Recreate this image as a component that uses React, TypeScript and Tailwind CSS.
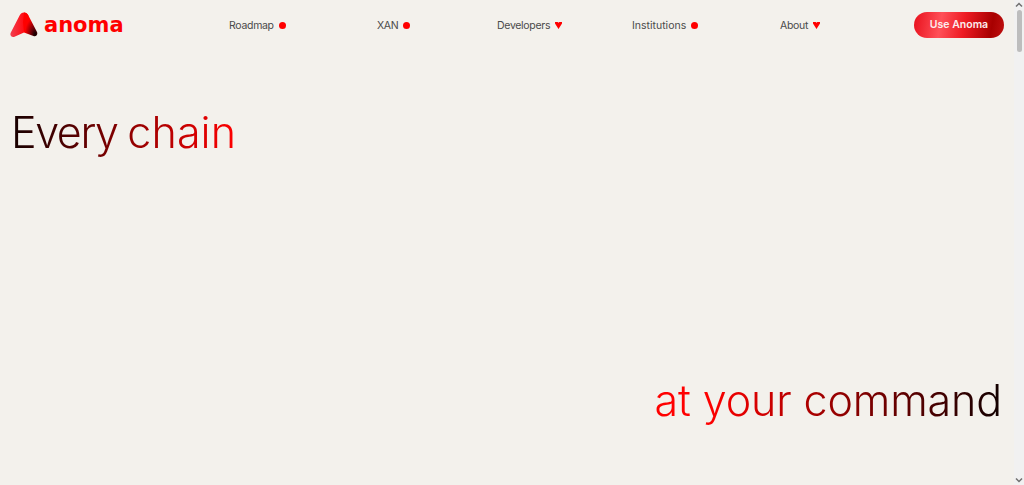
const FONT = "font-['Inter','Noto_Sans',sans-serif]";

function Logo() {
  return (
    <svg width="28" height="26" viewBox="0 0 28 26" className="shrink-0">
      <defs>
        <linearGradient id="left" x1="0" y1="0" x2="1" y2="0">
          <stop offset="0" stopColor="#f04050" />
          <stop offset="0.7" stopColor="#ff1018" />
          <stop offset="1" stopColor="#ff0000" />
        </linearGradient>
        <radialGradient id="right" cx="0.85" cy="0.92" r="0.72">
          <stop offset="0" stopColor="#0c0000" />
          <stop offset="0.4" stopColor="#700008" />
          <stop offset="1" stopColor="#ff0000" />
        </radialGradient>
      </defs>
      <path d="M14 .5c2 0 3.4 1 4.4 3L14 20.5 4.5 24.8c-2.7 1-5-1.300-3.800-4L9.600 3.500c1-2 2.400-3 4.400-3z" fill="url(#left)" />
      <path d="M14 .5c2 0 3.400 1 4.400 3L27 20c1.200 3-1.200 5-3.600 4L14 20.500 13 10z" fill="url(#right)" />
    </svg>
  );
}

function NavItem({ label, caret, wide }: { label: string; caret?: boolean; wide?: boolean }) {
  return (
    <a className={`flex items-center gap-[5px] text-[10.5px] leading-none text-[#4a4a4a] ${wide ? "tracking-normal" : "tracking-[-0.3px]"}`}>
      <span className="pt-[2px]">{label}</span>
      {caret ? (
        <svg width="7" height="7" viewBox="0 0 7 7"><path d="M0 0h2.700l.8.800.8-.800H7v1.500L3.500 7 0 1.500z" fill="#f00" /></svg>
      ) : (
        <span className="h-[7px] w-[7px] rounded-full bg-[#ff0000]" />
      )}
    </a>
  );
}

export default function App() {
  return (
    <div className={`flex h-[485px] overflow-hidden bg-[#f3f1ec] ${FONT}`}>
      <main className="flex flex-1 flex-col">
        <header className="flex h-[50px] items-center px-[10px]">
          <div className="flex w-[219px] items-center gap-[6px]">
            <Logo />
            <span className="pt-px text-[21px] font-bold leading-none text-[#ff0000] font-['DejaVu_Sans',sans-serif]">anoma</span>
          </div>
          <nav className="flex flex-1 items-center">
            <div className="w-[148px]"><NavItem label="Roadmap" /></div>
            <div className="w-[120px]"><NavItem label="XAN" /></div>
            <div className="w-[135px]"><NavItem label="Developers" caret /></div>
            <div className="w-[148px]"><NavItem label="Institutions" wide /></div>
            <div className="w-[134px]"><NavItem label="About" caret /></div>
          </nav>
          <button className="h-[26px] w-[90px] rounded-full bg-[linear-gradient(100deg,#e8101c_0%,#ff5058_30%,#ee1c24_55%,#a80000_85%,#c01010_100%)] text-[10.5px] font-semibold text-[#fbeeee]">
            Use Anoma
          </button>
        </header>
        <section className="flex flex-1 flex-col justify-between pb-[57px] pl-[11px] pr-[12px] pt-[54px]">
          <h1 className="w-fit bg-[linear-gradient(90deg,#140000_0%,#ff0000_100%)] bg-clip-text text-[43px] font-light leading-[56px] text-transparent">
            <span className="tracking-[-1.4px] [word-spacing:-1px]">Every </span>
            <span className="tracking-[0.1px]">chain</span>
          </h1>
          <h2 className="w-fit self-end bg-[linear-gradient(90deg,#ff0000_0%,#ff0000_15%,#100000_100%)] bg-clip-text text-[43px] font-light leading-[56px] tracking-[-0.13px] text-transparent">
            at your command
          </h2>
        </section>
      </main>
      <aside className="flex w-[10px] shrink-0 flex-col items-center bg-[#f1f1f1]">
        <svg width="8" height="10" viewBox="0 0 8 10"><path d="M1 6.500 4 3.500l3 3" stroke="#707070" strokeWidth="1.500" fill="none" /></svg>
        <div className="h-[42px] w-[5px] rounded-full bg-[#bdbdbd]" />
        <div className="flex-1" />
        <svg width="8" height="10" viewBox="0 0 8 10"><path d="M1 3.500l3 3 3-3" stroke="#707070" strokeWidth="1.500" fill="none" /></svg>
      </aside>
    </div>
  );
}
